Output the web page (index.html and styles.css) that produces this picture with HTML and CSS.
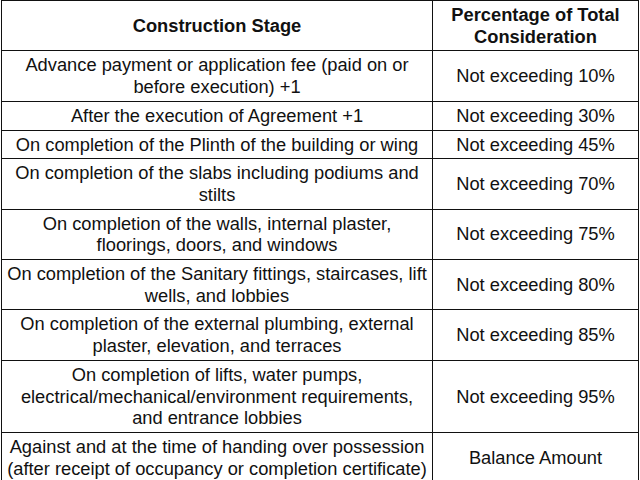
FILE: index.html
```html
<!DOCTYPE html>
<html lang="en">
<head>
<meta charset="utf-8">
<title>Construction Stage Payments</title>
<link rel="stylesheet" href="styles.css">
</head>
<body>
<table class="schedule">
  <colgroup>
    <col class="col-stage">
    <col class="col-pct">
  </colgroup>
  <thead>
    <tr>
      <th>Construction Stage</th>
      <th>Percentage of Total Consideration</th>
    </tr>
  </thead>
  <tbody>
    <tr><td>Advance payment or application fee (paid on or before execution) +1</td><td>Not exceeding 10%</td></tr>
    <tr><td>After the execution of Agreement +1</td><td>Not exceeding 30%</td></tr>
    <tr><td>On completion of the Plinth of the building or wing</td><td>Not exceeding 45%</td></tr>
    <tr><td>On completion of the slabs including podiums and stilts</td><td>Not exceeding 70%</td></tr>
    <tr><td>On completion of the walls, internal plaster, floorings, doors, and windows</td><td>Not exceeding 75%</td></tr>
    <tr><td>On completion of the Sanitary fittings, staircases, lift wells, and lobbies</td><td>Not exceeding 80%</td></tr>
    <tr><td>On completion of the external plumbing, external plaster, elevation, and terraces</td><td>Not exceeding 85%</td></tr>
    <tr><td>On completion of lifts, water pumps, electrical/mechanical/environment requirements, and entrance lobbies</td><td>Not exceeding 95%</td></tr>
    <tr><td>Against and at the time of handing over possession (after receipt of occupancy or completion certificate)</td><td>Balance Amount</td></tr>
  </tbody>
</table>
</body>
</html>
```
FILE: styles.css
```css
html, body {
  margin: 0;
  padding: 0;
  background: #ffffff;
}

.schedule {
  margin: 0 0 0 1px;
  width: 637px;
  border-collapse: collapse;
  table-layout: fixed;
  font-family: "Liberation Sans", Arial, sans-serif;
  font-size: 18.3px;
  line-height: 21.7px;
  color: #111111;
}

.col-stage {
  width: 431px;
}

.col-pct {
  width: 206px;
}

.schedule th,
.schedule td {
  border: 1px solid #111111;
  padding: 3px 4px;
  text-align: center;
  vertical-align: middle;
}

.schedule th {
  font-weight: bold;
}
```
